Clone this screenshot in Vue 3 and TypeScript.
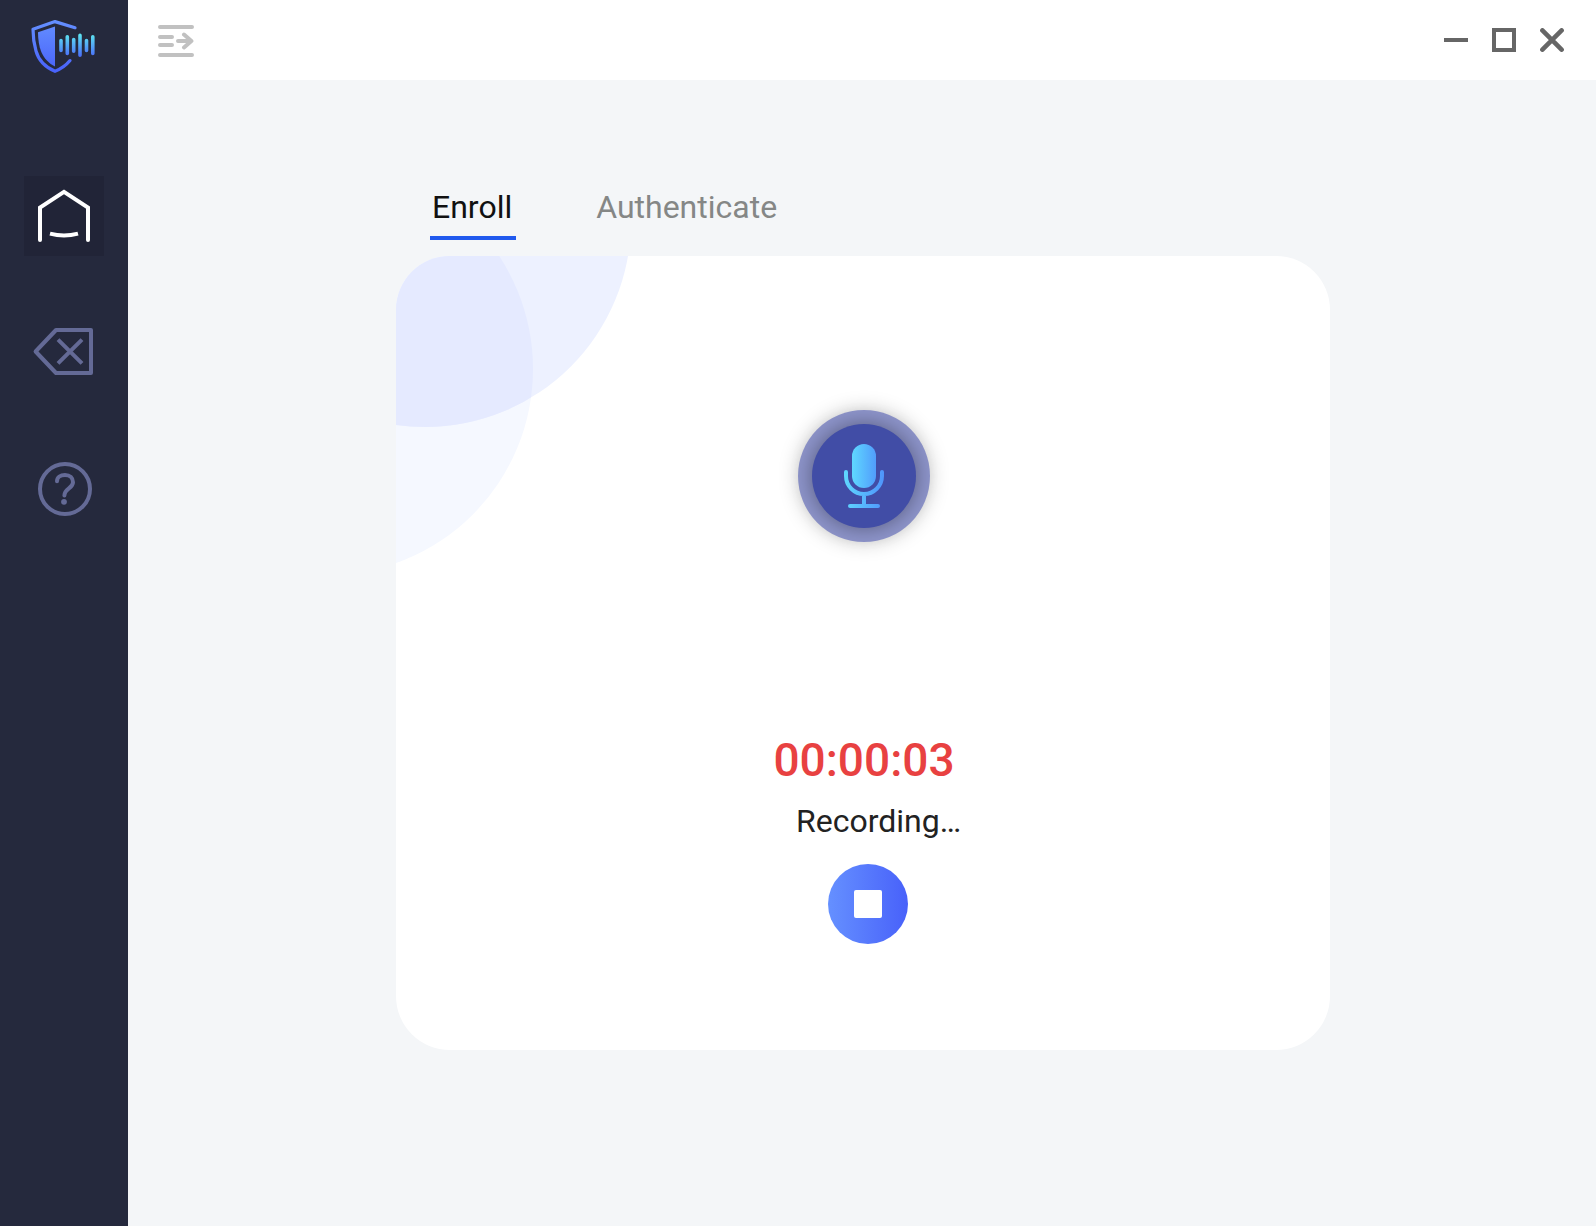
<script setup lang="ts">
import { ref } from 'vue'

type Tab = 'Enroll' | 'Authenticate'

const tabs: Tab[] = ['Enroll', 'Authenticate']
const activeTab = ref<Tab>('Enroll')
const elapsed = ref('00:00:03')
</script>

<template>
  <div class="app">
    <aside class="sidebar">
      <svg class="logo" viewBox="0 0 128 96" aria-hidden="true">
        <defs>
          <linearGradient id="shield" x1="0" y1="20" x2="0" y2="73" gradientUnits="userSpaceOnUse">
            <stop offset="0" stop-color="#6590ff" />
            <stop offset="1" stop-color="#4861fa" />
          </linearGradient>
          <linearGradient id="wave" x1="0" y1="34" x2="0" y2="57" gradientUnits="userSpaceOnUse">
            <stop offset="0" stop-color="#5de6f0" />
            <stop offset="1" stop-color="#4a6bfa" />
          </linearGradient>
        </defs>
        <path
          d="M75 27.7L55 21.6L33 29.2C33 37 34 44 36 51C38.5 60 46 67.5 55 71.3C61 69 66 65.5 70 60.6"
          fill="none" stroke="url(#shield)" stroke-width="3.2" stroke-linecap="round" stroke-linejoin="round"
        />
        <path d="M38 32.2L55 26.5V66.5C49 63.5 44 58.5 41.3 52C39 46 38 39 38 32.2Z" fill="url(#shield)" />
        <path
          d="M61 40.6V50.4M67.3 36.8V53.4M73.7 39.6V51.2M80 35.4V55.2M86.5 40.6V50.4M92.8 36.8V53.4"
          fill="none" stroke="url(#wave)" stroke-width="3.6" stroke-linecap="round"
        />
      </svg>
      <nav class="nav" aria-label="Main">
        <button type="button" class="nav-item active" aria-label="Home">
          <svg viewBox="0 0 80 80">
            <path d="M16 64V31.6L40 15.8L64 31.6V64" stroke-linecap="round" />
            <path d="M26 57.6Q40 61.2 54 57.6" />
          </svg>
        </button>
        <button type="button" class="nav-item" aria-label="Delete">
          <svg viewBox="0 0 80 80">
            <path d="M32 18H67V61H32L11.6 39.5Z" stroke-linejoin="round" />
            <path d="M34 27.6L58 51.4M58 27.6L34 51.4" />
          </svg>
        </button>
        <button type="button" class="nav-item" aria-label="Help">
          <svg viewBox="0 0 80 80">
            <circle cx="41" cy="41" r="25" />
            <path d="M33 33.2C33 29 36.5 27 41 27C46 27 49 30 49 34.2C49 40.5 40.4 40.5 40.4 47.6" stroke-linecap="round" />
            <circle class="dot" cx="40" cy="53.8" r="2.9" />
          </svg>
        </button>
      </nav>
    </aside>

    <div class="content">
      <header class="topbar">
        <button type="button" class="icon-button expand" aria-label="Expand menu">
          <svg viewBox="0 0 36 34">
            <path d="M2 4H34M2 14H14M2 22H14M2 32H34M20 18H33M26 11.6L33.4 18L26 24.4" />
          </svg>
        </button>
        <div class="window-controls">
          <button type="button" class="icon-button" aria-label="Minimize">
            <svg viewBox="0 0 24 24"><path d="M0 12H24" /></svg>
          </button>
          <button type="button" class="icon-button" aria-label="Maximize">
            <svg viewBox="0 0 24 24"><path d="M2 2H22V22H2Z" /></svg>
          </button>
          <button type="button" class="icon-button" aria-label="Close">
            <svg viewBox="0 0 24 24"><path d="M2.4 2.4L21.6 21.6M21.6 2.4L2.4 21.6" stroke-width="4.6" stroke-linecap="round" /></svg>
          </button>
        </div>
      </header>

      <main class="main">
        <div class="panel">
          <div class="tabs" role="tablist">
            <button
              v-for="tab in tabs"
              :key="tab"
              type="button"
              role="tab"
              class="tab"
              :class="{ selected: tab === activeTab }"
              :aria-selected="tab === activeTab"
              @click="activeTab = tab"
            >{{ tab }}</button>
          </div>

          <section class="card">
            <svg class="bubbles" viewBox="0 0 240 320" aria-hidden="true">
              <defs>
                <clipPath id="upper"><circle cx="29" cy="-35" r="206" /></clipPath>
              </defs>
              <circle cx="-69" cy="113" r="206" fill="#f5f8ff" />
              <circle cx="29" cy="-35" r="206" fill="#edf1ff" />
              <circle cx="-69" cy="113" r="206" fill="#e5eaff" clip-path="url(#upper)" />
            </svg>
            <div class="mic-ring">
              <div class="mic">
                <svg viewBox="0 0 104 104" aria-hidden="true">
                  <defs>
                    <linearGradient id="mic" x1="32" y1="0" x2="72" y2="0" gradientUnits="userSpaceOnUse">
                      <stop offset="0" stop-color="#5fd8ff" />
                      <stop offset="1" stop-color="#4f94fb" />
                    </linearGradient>
                    <linearGradient id="mic-body" x1="40" y1="0" x2="64" y2="0" gradientUnits="userSpaceOnUse">
                      <stop offset="0" stop-color="#5fd8ff" />
                      <stop offset="1" stop-color="#519dfc" />
                    </linearGradient>
                  </defs>
                  <rect x="40" y="20" width="24" height="44" rx="12" fill="url(#mic-body)" />
                  <path
                    d="M34 48V52A18 18 0 0 0 70 52V48M52 70V82M38 82H66"
                    fill="none" stroke="url(#mic)" stroke-width="4" stroke-linecap="round"
                  />
                </svg>
              </div>
            </div>
            <div class="timer" role="timer">{{ elapsed }}</div>
            <p class="status">Recording…</p>
            <button type="button" class="stop" aria-label="Stop recording">
              <span class="stop-mark"></span>
            </button>
          </section>
        </div>
      </main>
    </div>
  </div>
</template>

<style>
body {
  margin: 0;
  background: #f4f6f8;
}
</style>

<style scoped>
.app {
  display: flex;
  min-height: 100vh;
  font-family: Roboto, "Liberation Sans", sans-serif;
  background: #f4f6f8;
}

button {
  padding: 0;
  border: 0;
  background: none;
  font: inherit;
  cursor: pointer;
}

svg {
  display: block;
}

.sidebar {
  flex: 0 0 128px;
  display: flex;
  flex-direction: column;
  gap: 80px;
  background: #25293d;
}

.logo {
  width: 128px;
  height: 96px;
}

.nav {
  display: flex;
  flex-direction: column;
  align-items: center;
  gap: 56px;
}

.nav-item {
  width: 80px;
  height: 80px;
  color: #646a96;
}

.nav-item.active {
  color: #fff;
  background: #212437;
}

.nav-item svg {
  fill: none;
  stroke: currentColor;
  stroke-width: 4;
}

.nav-item .dot {
  fill: currentColor;
  stroke: none;
}

.content {
  flex: 1;
  min-width: 0;
  display: flex;
  flex-direction: column;
}

.topbar {
  display: flex;
  align-items: center;
  justify-content: space-between;
  height: 80px;
  padding: 0 32px 0 30px;
  background: #fff;
}

.window-controls {
  display: flex;
  gap: 24px;
}

.icon-button {
  width: 24px;
  color: #666;
}

.icon-button.expand {
  width: 36px;
  color: #c1c1c1;
}

.icon-button svg {
  fill: none;
  stroke: currentColor;
  stroke-width: 4;
}

.expand svg {
  stroke-linecap: round;
  stroke-linejoin: round;
}

.main {
  flex: 1;
  padding: 104px 30px 64px 32px;
}

.panel {
  max-width: 934px;
  margin: 0 auto;
}

.tabs {
  display: flex;
  gap: 78px;
  height: 56px;
  margin-bottom: 16px;
  padding-left: 34px;
}

.tab {
  padding: 0 4px 6px 2px;
  border-bottom: 4px solid transparent;
  font-size: 32px;
  line-height: 44px;
  color: #858786;
}

.tab.selected {
  border-color: #2059ee;
  color: #111;
}

.card {
  position: relative;
  overflow: hidden;
  display: flex;
  flex-direction: column;
  align-items: center;
  padding: 154px 0 106px 2px;
  border-radius: 54px;
  background: #fff;
}

.bubbles {
  position: absolute;
  top: 0;
  left: 0;
  width: 240px;
  height: 320px;
}

.mic-ring {
  padding: 14px;
  border-radius: 50%;
  background: #8d94ca;
  box-shadow: 0 0 20px rgba(0, 0, 0, 0.22);
}

.mic {
  width: 104px;
  height: 104px;
  border-radius: 50%;
  background: #414da6;
  box-shadow: 0 0 20px rgba(0, 0, 0, 0.38);
}

.timer {
  margin-top: 190px;
  font-size: 46px;
  font-weight: 500;
  line-height: 56px;
  color: #e84141;
}

.status {
  margin: 13px 0 23px;
  padding-left: 29px;
  font-size: 32px;
  line-height: 40px;
  color: #222;
}

.stop {
  display: flex;
  align-items: center;
  justify-content: center;
  width: 80px;
  height: 80px;
  margin-left: 8px;
  border-radius: 50%;
  background: linear-gradient(90deg, #6590ff, #4861fa);
}

.stop-mark {
  width: 28px;
  height: 28px;
  border-radius: 2px;
  background: #fff;
}
</style>
